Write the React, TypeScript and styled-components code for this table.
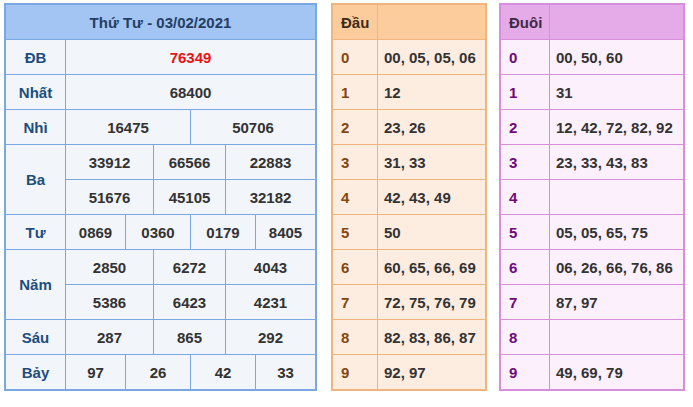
import React from "react";
import styled, { createGlobalStyle } from "styled-components";

const Global = createGlobalStyle`
  html, body { margin: 0; padding: 0; background: #ffffff; }
  body { font-family: "Liberation Sans", Arial, sans-serif; }
`;

const Page = styled.div`
  display: flex;
  align-items: flex-start;
  padding: 3px 0 0 4px;
`;

const Board = styled.div<{ $cols: string; $border: string; $ml?: number }>`
  display: grid;
  grid-template-columns: ${(p) => p.$cols};
  grid-auto-rows: 34px;
  gap: 1px;
  background: ${(p) => p.$border};
  border: 2px solid ${(p) => p.$border};
  margin-left: ${(p) => p.$ml ?? 0}px;
  font-size: 15px;
  font-weight: bold;
`;

const Title = styled.div`
  grid-column: 1 / -1;
  background: #a2c5f4;
  color: #253f63;
  display: flex;
  align-items: center;
  justify-content: center;
`;

type Tone = "label" | "num" | "red";
const toneColor: Record<Tone, string> = {
  label: "#1d4d7d",
  num: "#333333",
  red: "#ee1111",
};

const Cell = styled.div<{ $col: string; $span?: number; $tone: Tone }>`
  grid-column: ${(p) => p.$col};
  grid-row: ${(p) => (p.$span ? `span ${p.$span}` : "auto")};
  background: #f2f5fa;
  color: ${(p) => toneColor[p.$tone]};
  display: flex;
  align-items: center;
  justify-content: center;
`;

const HeadCell = styled.div<{ $bg: string; $color: string }>`
  background: ${(p) => p.$bg};
  color: ${(p) => p.$color};
  display: flex;
  align-items: center;
  padding-left: 8px;
`;

const KeyCell = styled.div<{ $bg: string; $color: string }>`
  background: ${(p) => p.$bg};
  color: ${(p) => p.$color};
  display: flex;
  align-items: center;
  padding-left: 8px;
`;

const ValCell = styled.div<{ $bg: string }>`
  background: ${(p) => p.$bg};
  color: #333333;
  display: flex;
  align-items: center;
  padding-left: 6px;
  white-space: nowrap;
`;

type Row = { label: string; span?: number; cells: [string, string][]; red?: boolean };

const prizeRows: Row[] = [
  { label: "ĐB", cells: [["2 / -1", "76349"]], red: true },
  { label: "Nhất", cells: [["2 / -1", "68400"]] },
  { label: "Nhì", cells: [["2 / 5", "16475"], ["5 / -1", "50706"]] },
  {
    label: "Ba",
    span: 2,
    cells: [
      ["2 / 4", "33912"], ["4 / 6", "66566"], ["6 / -1", "22883"],
      ["2 / 4", "51676"], ["4 / 6", "45105"], ["6 / -1", "32182"],
    ],
  },
  { label: "Tư", cells: [["2 / 3", "0869"], ["3 / 5", "0360"], ["5 / 7", "0179"], ["7 / -1", "8405"]] },
  {
    label: "Năm",
    span: 2,
    cells: [
      ["2 / 4", "2850"], ["4 / 6", "6272"], ["6 / -1", "4043"],
      ["2 / 4", "5386"], ["4 / 6", "6423"], ["6 / -1", "4231"],
    ],
  },
  { label: "Sáu", cells: [["2 / 4", "287"], ["4 / 6", "865"], ["6 / -1", "292"]] },
  { label: "Bảy", cells: [["2 / 3", "97"], ["3 / 5", "26"], ["5 / 7", "42"], ["7 / -1", "33"]] },
];

const dau = [
  "00, 05, 05, 06", "12", "23, 26", "31, 33", "42, 43, 49",
  "50", "60, 65, 66, 69", "72, 75, 76, 79", "82, 83, 86, 87", "92, 97",
];
const duoi = [
  "00, 50, 60", "31", "12, 42, 72, 82, 92", "23, 33, 43, 83", "",
  "05, 05, 65, 75", "06, 26, 66, 76, 86", "87, 97", "", "49, 69, 79",
];

type Theme = { border: string; head: string; headText: string; cell: string; key: string };
const orange: Theme = { border: "#efb57c", head: "#fccc9c", headText: "#3d2a18", cell: "#fdece0", key: "#83470f" };
const violet: Theme = { border: "#d88fdb", head: "#e5abe9", headText: "#3f2a44", cell: "#fcf0fc", key: "#6d0a7a" };

function LotoTable({ title, values, theme, cols, ml }: { title: string; values: string[]; theme: Theme; cols: string; ml: number }) {
  return (
    <Board $cols={cols} $border={theme.border} $ml={ml}>
      <HeadCell $bg={theme.head} $color={theme.headText}>{title}</HeadCell>
      <HeadCell $bg={theme.head} $color={theme.headText} />
      {values.map((v, i) => (
        <React.Fragment key={i}>
          <KeyCell $bg={theme.cell} $color={theme.key}>{i}</KeyCell>
          <ValCell $bg={theme.cell}>{v}</ValCell>
        </React.Fragment>
      ))}
    </Board>
  );
}

export default function App() {
  return (
    <>
      <Global />
      <Page>
        <Board $cols="59px 59px 27px 36px 34px 29px 59px" $border="#7ba7e2">
          <Title>Thứ Tư - 03/02/2021</Title>
          {prizeRows.map((r) => (
            <React.Fragment key={r.label}>
              <Cell $col="1" $span={r.span} $tone="label">{r.label}</Cell>
              {r.cells.map(([col, v], i) => (
                <Cell key={i} $col={col} $tone={r.red ? "red" : "num"}>{v}</Cell>
              ))}
            </React.Fragment>
          ))}
        </Board>
        <LotoTable title="Đầu" values={dau} theme={orange} cols="44px 107px" ml={14} />
        <LotoTable title="Đuôi" values={duoi} theme={violet} cols="48px 133px" ml={12} />
      </Page>
    </>
  );
}
